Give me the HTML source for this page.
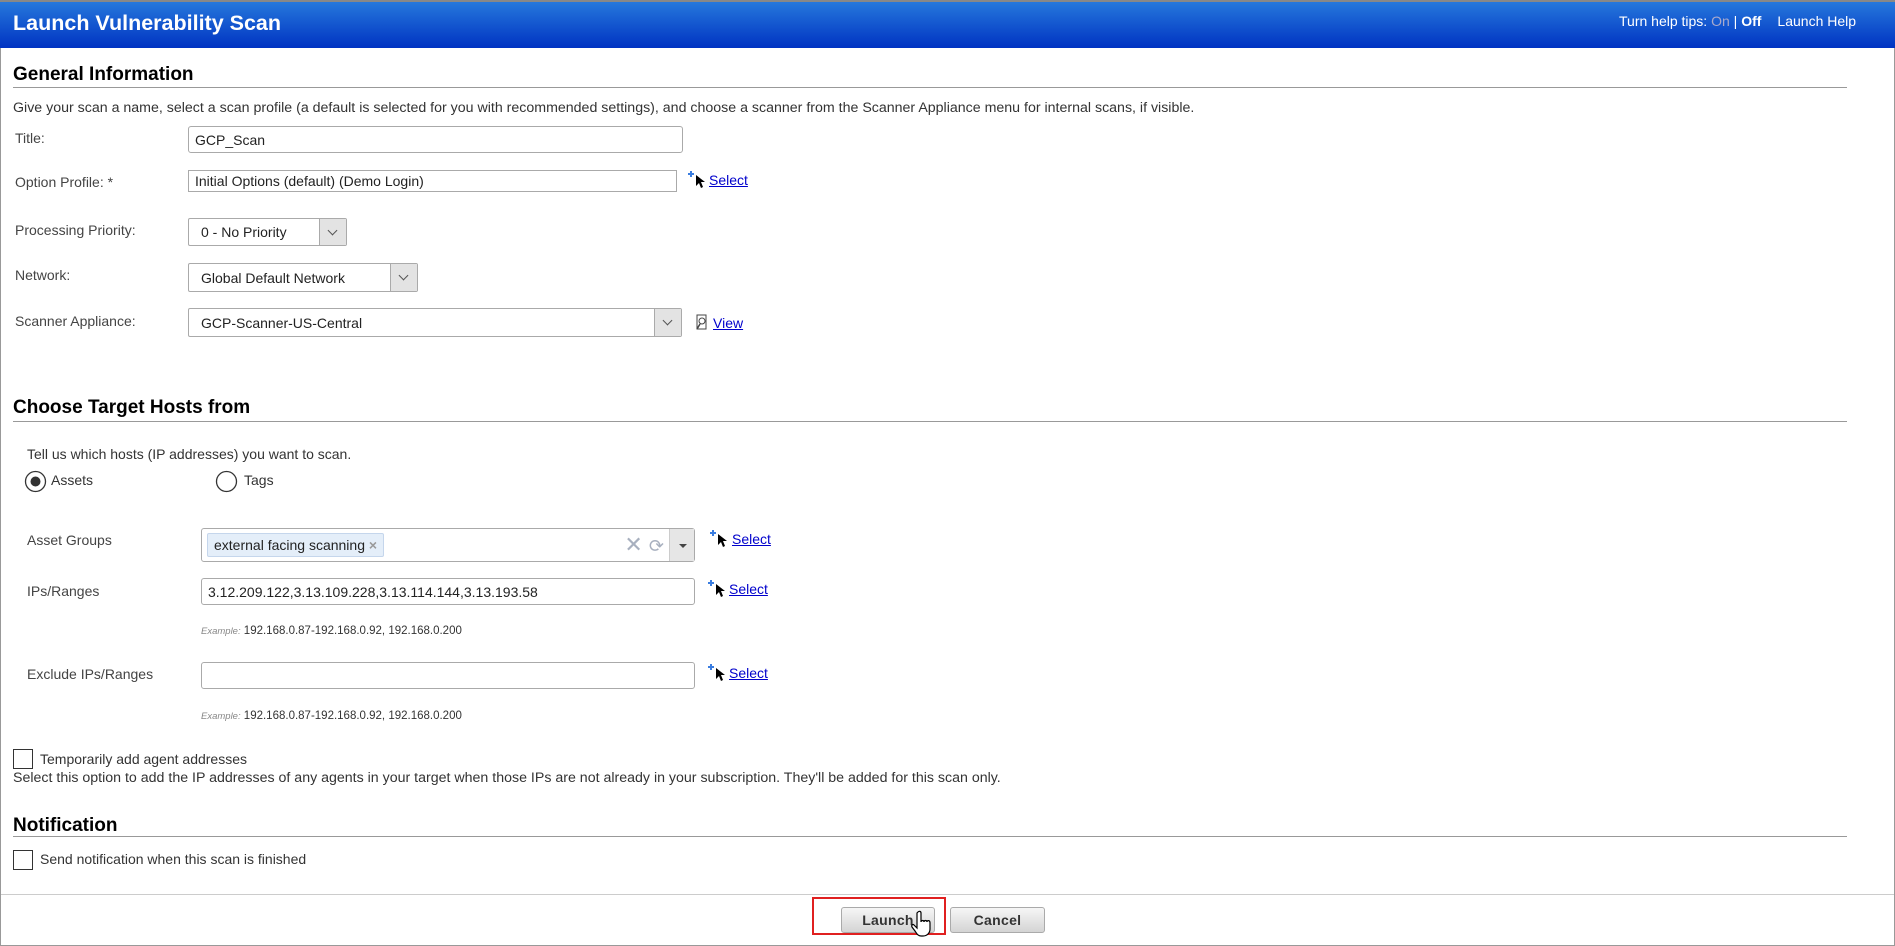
<!DOCTYPE html>
<html><head><meta charset="utf-8">
<style>
*{box-sizing:border-box;margin:0;padding:0}
body{width:1895px;height:946px;overflow:hidden;background:#fff;font-family:"Liberation Sans",Arial,sans-serif;font-size:14px;color:#333;position:relative}
.abs{position:absolute;white-space:nowrap}
.frame{position:absolute;left:0;top:0;width:1895px;height:946px;border:1px solid #999;border-top:none}
.hdr{position:absolute;left:0;top:0;width:1895px;height:48px;background:linear-gradient(#2678dc,#0033c2);border-top:2px solid #888}
h2{position:absolute;left:13px;font-size:19px;font-weight:bold;color:#000}
.rule{position:absolute;left:13px;width:1834px;height:1px;background:#999}
.lbl{position:absolute;color:#444;font-size:14px;transform:translateY(-50%)}
.inp{position:absolute;border:1px solid #aaa;border-radius:2px;background:#fff;font-size:14px;color:#222;padding-left:6px;display:flex;align-items:center}
.sel{position:absolute;border:1px solid #aaa;border-radius:2px;background:#fff;font-size:14px;color:#222;padding-left:12px;display:flex;align-items:center}
.sel .ar{position:absolute;right:0;top:0;bottom:0;width:27px;background:#e3e3e3;border-left:1px solid #aaa}
.sel .ar:after{content:"";position:absolute;left:9px;top:8px;width:6px;height:6px;border-right:1px solid #555;border-bottom:1px solid #555;transform:rotate(45deg)}
a{color:#00c;text-decoration:underline}
.ex{position:absolute;font-size:11.5px;color:#333}
.ex i{font-size:9.5px;color:#888}
.cb{position:absolute;width:20px;height:20px;border:1px solid #333;background:#fff}
.btn{position:absolute;height:26px;border:1px solid #aaa;border-radius:3px;background:linear-gradient(#f6f6f6,#d4d4d4);font-weight:bold;font-size:14px;color:#333;text-align:center;line-height:24px;letter-spacing:.3px}
</style></head><body>
<div class="frame"></div>
<div class="hdr"></div>
<div class="abs" style="left:13px;top:11px;font-size:21.5px;font-weight:bold;color:#fff">Launch Vulnerability Scan</div>
<div class="abs" style="left:1619px;top:13px;font-size:14px;color:#fff">Turn help tips: <span style="color:#aac">On</span> | <b>Off</b><span style="margin-left:16px">Launch Help</span></div>

<h2 style="top:64px">General Information</h2>
<div class="rule" style="top:87px"></div>
<div class="abs" style="left:13px;top:100px;font-size:14.2px">Give your scan a name, select a scan profile (a default is selected for you with recommended settings), and choose a scanner from the Scanner Appliance menu for internal scans, if visible.</div>

<div class="lbl" style="left:15px;top:138px">Title:</div>
<div class="inp" style="left:188px;top:126px;width:495px;height:27px;border-radius:3px">GCP_Scan</div>
<div class="lbl" style="left:15px;top:182px">Option Profile: *</div>
<div class="inp" style="left:188px;top:170px;width:489px;height:22px;border-radius:0">Initial Options (default) (Demo Login)</div>
<svg class="abs" style="left:688px;top:171px" width="18" height="18"><path d="M3 0v6M0 3h6" stroke="#3a7de0" stroke-width="2"/><path d="M8 4l0 11 3-3 2 5 2-1-2-5 4 0z" fill="#000"/></svg>
<a class="abs" style="left:709px;top:172px">Select</a>

<div class="lbl" style="left:15px;top:230px">Processing Priority:</div>
<div class="sel" style="left:188px;top:218px;width:159px;height:28px">0 - No Priority<div class="ar"></div></div>
<div class="lbl" style="left:15px;top:275px">Network:</div>
<div class="sel" style="left:188px;top:263px;width:230px;height:29px">Global Default Network<div class="ar"></div></div>
<div class="lbl" style="left:15px;top:321px">Scanner Appliance:</div>
<div class="sel" style="left:188px;top:308px;width:494px;height:29px">GCP-Scanner-US-Central<div class="ar"></div></div>
<svg class="abs" style="left:695px;top:314px" width="14" height="17"><path d="M2 1h9v14H2z" fill="#fff" stroke="#444"/><circle cx="7" cy="7" r="3" fill="none" stroke="#444"/><path d="M5 10l-3 5" stroke="#444" stroke-width="1.5"/></svg>
<a class="abs" style="left:713px;top:315px">View</a>

<h2 style="top:397px">Choose Target Hosts from</h2>
<div class="rule" style="top:421px"></div>
<div class="abs" style="left:27px;top:446px">Tell us which hosts (IP addresses) you want to scan.</div>
<svg class="abs" style="left:24px;top:470px" width="24" height="24"><circle cx="11.5" cy="11.5" r="10" fill="#fff" stroke="#333" stroke-width="1.3"/><circle cx="11.5" cy="11.5" r="5" fill="#333"/></svg>
<div class="abs" style="left:51px;top:472px">Assets</div>
<svg class="abs" style="left:215px;top:470px" width="24" height="24"><circle cx="11.5" cy="11.5" r="10" fill="#fff" stroke="#333" stroke-width="1.3"/></svg>
<div class="abs" style="left:244px;top:472px">Tags</div>

<div class="lbl" style="left:27px;top:540px">Asset Groups</div>
<div class="inp" style="left:201px;top:528px;width:494px;height:34px;border-radius:3px;padding-left:5px">
 <span style="background:#e4eef9;border:1px solid #c5d6ec;border-radius:2px;padding:2px 6px;height:24px;line-height:19px;font-size:14px">external facing scanning <span style="color:#999;font-weight:bold">×</span></span>
 <span style="position:absolute;right:30px;top:4px;color:#a8b0bf;font-size:22px;line-height:24px">✕ <span style="font-size:18px">⟳</span></span>
 <div style="position:absolute;right:0;top:0;bottom:0;width:25px;background:#e6e6e6;border-left:1px solid #ccc"><div style="position:absolute;left:9px;top:15px;border:4px solid transparent;border-top:4px solid #444"></div></div>
</div>
<svg class="abs" style="left:710px;top:530px" width="18" height="18"><path d="M3 0v6M0 3h6" stroke="#3a7de0" stroke-width="2"/><path d="M8 4l0 11 3-3 2 5 2-1-2-5 4 0z" fill="#000"/></svg>
<a class="abs" style="left:732px;top:531px">Select</a>

<div class="lbl" style="left:27px;top:591px">IPs/Ranges</div>
<div class="inp" style="left:201px;top:578px;width:494px;height:27px;border-radius:3px">3.12.209.122,3.13.109.228,3.13.114.144,3.13.193.58</div>
<svg class="abs" style="left:708px;top:580px" width="18" height="18"><path d="M3 0v6M0 3h6" stroke="#3a7de0" stroke-width="2"/><path d="M8 4l0 11 3-3 2 5 2-1-2-5 4 0z" fill="#000"/></svg>
<a class="abs" style="left:729px;top:581px">Select</a>
<div class="ex" style="left:201px;top:625px"><i>Example:</i> 192.168.0.87-192.168.0.92, 192.168.0.200</div>

<div class="lbl" style="left:27px;top:674px">Exclude IPs/Ranges</div>
<div class="inp" style="left:201px;top:662px;width:494px;height:27px;border-radius:3px"></div>
<svg class="abs" style="left:708px;top:664px" width="18" height="18"><path d="M3 0v6M0 3h6" stroke="#3a7de0" stroke-width="2"/><path d="M8 4l0 11 3-3 2 5 2-1-2-5 4 0z" fill="#000"/></svg>
<a class="abs" style="left:729px;top:665px">Select</a>
<div class="ex" style="left:201px;top:710px"><i>Example:</i> 192.168.0.87-192.168.0.92, 192.168.0.200</div>

<div class="cb" style="left:13px;top:749px"></div>
<div class="abs" style="left:40px;top:751px">Temporarily add agent addresses</div>
<div class="abs" style="left:13px;top:770px;font-size:14.2px">Select this option to add the IP addresses of any agents in your target when those IPs are not already in your subscription. They'll be added for this scan only.</div>

<h2 style="top:815px">Notification</h2>
<div class="rule" style="top:836px"></div>
<div class="cb" style="left:13px;top:850px"></div>
<div class="abs" style="left:40px;top:851px">Send notification when this scan is finished</div>

<div style="position:absolute;left:1px;top:894px;width:1893px;height:1px;background:#ccc"></div>
<div style="position:absolute;left:812px;top:897px;width:134px;height:38px;border:2px solid #e02020"></div>
<div class="btn" style="left:841px;top:907px;width:94px">Launch</div>
<div class="btn" style="left:950px;top:907px;width:95px">Cancel</div>
<svg class="abs" style="left:911px;top:910px" width="22" height="30"><path d="M7 2c1-1 3-1 3 1v9c0-2 3-2 3 0 0-2 3-2 3 0 0-2 3-2 3 1v6c0 4-3 7-7 7h-2c-3 0-4-2-6-5l-3-4c-1-2 1-3 2-2l3 3V3z" fill="#fff" stroke="#000" stroke-width="1.2"/></svg>
</body></html>
